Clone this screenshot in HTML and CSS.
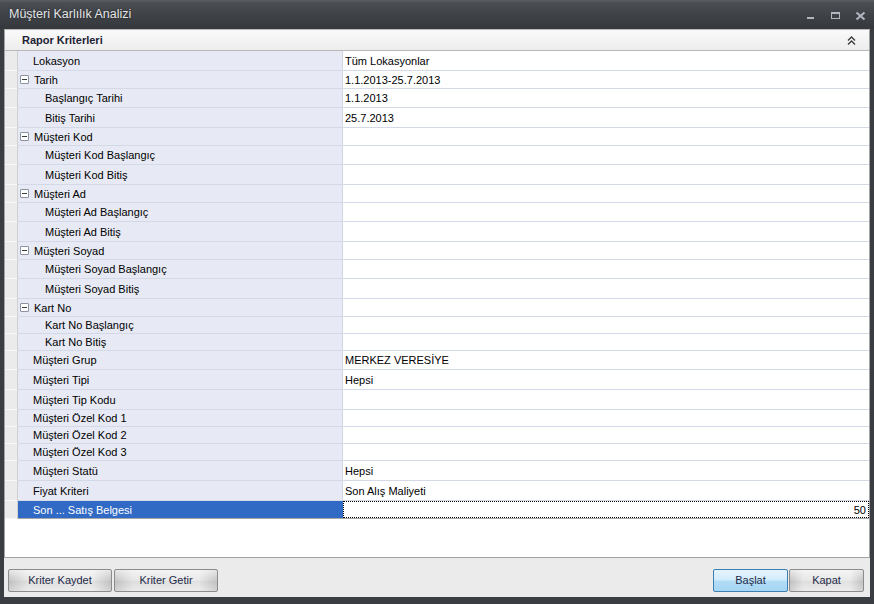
FILE: index.html
```html
<!DOCTYPE html>
<html lang="tr">
<head>
    <meta charset="UTF-8">
    <title>Müşteri Karlılık Analizi</title>
    <link rel="stylesheet" href="styles.css">
</head>
<body>
<div class="window">
    <div class="titlebar">
        <span class="title">Müşteri Karlılık Analizi</span>
        <div class="controls">
            <svg width="10" height="10" viewBox="0 0 10 10"><rect x="1" y="6" width="7" height="2" fill="#b3b7bf"/></svg>
            <svg width="11" height="10" viewBox="0 0 11 10"><rect x="1.5" y="1.5" width="8" height="6" fill="none" stroke="#b3b7bf"/><rect x="1" y="1" width="9" height="2" fill="#b3b7bf"/></svg>
            <svg width="11" height="10" viewBox="0 0 11 10"><path d="M1.5 1.5 L9.5 8.5 M9.5 1.5 L1.5 8.5" stroke="#b3b7bf" stroke-width="2"/></svg>
        </div>
    </div>

    <div class="client">
        <div class="panel">
            <div class="panel-head">
                <span>Rapor Kriterleri</span>
                <svg width="9" height="9" viewBox="0 0 9 9"><path d="M1 4.5 L4.5 1 L8 4.5 M1 8.5 L4.5 5 L8 8.5" fill="none" stroke="#3a3a3a" stroke-width="1.3"/></svg>
            </div>
            <div class="grid">
                <div class="row h20"><div class="ind"></div><div class="lbl">Lokasyon</div><div class="val">Tüm Lokasyonlar</div></div>
                <div class="row h18"><div class="ind"></div><div class="lbl grp"><i class="minus"></i>Tarih</div><div class="val">1.1.2013-25.7.2013</div></div>
                <div class="row h19"><div class="ind"></div><div class="lbl sub">Başlangıç Tarihi</div><div class="val">1.1.2013</div></div>
                <div class="row h20"><div class="ind"></div><div class="lbl sub">Bitiş Tarihi</div><div class="val">25.7.2013</div></div>
                <div class="row h18"><div class="ind"></div><div class="lbl grp"><i class="minus"></i>Müşteri Kod</div><div class="val"></div></div>
                <div class="row h19"><div class="ind"></div><div class="lbl sub">Müşteri Kod Başlangıç</div><div class="val"></div></div>
                <div class="row h20"><div class="ind"></div><div class="lbl sub">Müşteri Kod Bitiş</div><div class="val"></div></div>
                <div class="row h18"><div class="ind"></div><div class="lbl grp"><i class="minus"></i>Müşteri Ad</div><div class="val"></div></div>
                <div class="row h19"><div class="ind"></div><div class="lbl sub">Müşteri Ad Başlangıç</div><div class="val"></div></div>
                <div class="row h20"><div class="ind"></div><div class="lbl sub">Müşteri Ad Bitiş</div><div class="val"></div></div>
                <div class="row h18"><div class="ind"></div><div class="lbl grp"><i class="minus"></i>Müşteri Soyad</div><div class="val"></div></div>
                <div class="row h19"><div class="ind"></div><div class="lbl sub">Müşteri Soyad Başlangıç</div><div class="val"></div></div>
                <div class="row h20"><div class="ind"></div><div class="lbl sub">Müşteri Soyad Bitiş</div><div class="val"></div></div>
                <div class="row h18"><div class="ind"></div><div class="lbl grp"><i class="minus"></i>Kart No</div><div class="val"></div></div>
                <div class="row h17"><div class="ind"></div><div class="lbl sub">Kart No Başlangıç</div><div class="val"></div></div>
                <div class="row h17"><div class="ind"></div><div class="lbl sub">Kart No Bitiş</div><div class="val"></div></div>
                <div class="row h19"><div class="ind"></div><div class="lbl">Müşteri Grup</div><div class="val">MERKEZ VERESİYE</div></div>
                <div class="row h20"><div class="ind"></div><div class="lbl">Müşteri Tipi</div><div class="val">Hepsi</div></div>
                <div class="row h20"><div class="ind"></div><div class="lbl">Müşteri Tip Kodu</div><div class="val"></div></div>
                <div class="row h17"><div class="ind"></div><div class="lbl">Müşteri Özel Kod 1</div><div class="val"></div></div>
                <div class="row h17"><div class="ind"></div><div class="lbl">Müşteri Özel Kod 2</div><div class="val"></div></div>
                <div class="row h17"><div class="ind"></div><div class="lbl">Müşteri Özel Kod 3</div><div class="val"></div></div>
                <div class="row h20"><div class="ind"></div><div class="lbl">Müşteri Statü</div><div class="val">Hepsi</div></div>
                <div class="row h20"><div class="ind"></div><div class="lbl">Fiyat Kriteri</div><div class="val">Son Alış Maliyeti</div></div>
                <div class="row h17 selected"><div class="ind"></div><div class="lbl">Son ... Satış Belgesi</div><div class="val edit">50</div></div>
            </div>
        </div>

        <div class="footer">
            <div class="btn-group">
                <button class="btn">Kriter Kaydet</button>
                <button class="btn">Kriter Getir</button>
            </div>
            <div class="btn-group right">
                <button class="btn">Başlat</button>
                <button class="btn plain">Kapat</button>
            </div>
        </div>
    </div>
</div>
</body>
</html>
```

FILE: styles.css
```css
html, body {
    margin: 0;
    padding: 0;
}
body {
    width: 874px;
    height: 604px;
    overflow: hidden;
    background-color: #3a3d42;
    font-family: "Liberation Sans", Arial, sans-serif;
    font-size: 11px;
    color: #000000;
}

.window {
    display: flex;
    flex-direction: column;
    height: 604px;
}

.titlebar {
    height: 29px;
    flex: none;
    display: flex;
    align-items: center;
    justify-content: space-between;
    padding: 0 8px 0 9px;
    box-sizing: border-box;
    background: linear-gradient(#5b5e64 0px, #4a4d52 3px, #3e4146 16px, #35383d 29px);
}
.title {
    color: #e4e5e7;
    font-size: 12.5px;
    text-shadow: 0 0 2px #1d1f22;
    padding-bottom: 1px;
}
.controls {
    display: flex;
    gap: 14px;
    align-items: center;
    padding-top: 2px;
}

.client {
    flex: 1;
    display: flex;
    flex-direction: column;
    margin: 0 4px 7px 4px;
    background-color: #ebebeb;
}

.panel {
    flex: 1;
    background-color: #ffffff;
    border: 1px solid #a3a3a3;
    border-top: 1px solid #b8b8b8;
}
.panel-head {
    height: 20px;
    display: flex;
    align-items: center;
    justify-content: space-between;
    padding: 0 13px 0 17px;
    font-weight: bold;
    color: #1d2233;
    background: linear-gradient(#fafafa, #ededed);
    border-bottom: 1px solid #b9b9b9;
}

.grid {
    border-bottom: 1px solid #a7a7a7;
}
.row {
    display: flex;
    box-sizing: border-box;
    border-bottom: 1px solid #d3d9e6;
}
.row:last-child {
    border-bottom: none;
}
.h17 { height: 17px; }
.h18 { height: 18px; }
.h19 { height: 19px; }
.h20 { height: 20px; }

.ind {
    width: 13px;
    flex: none;
    box-sizing: border-box;
    background-color: #ebebeb;
    border-right: 1px solid #d0d0d0;
    margin-bottom: -1px;
    box-shadow: inset 0 -1px 0 #f8f8f8;
}
.lbl {
    width: 325px;
    flex: none;
    box-sizing: border-box;
    display: flex;
    align-items: center;
    padding-left: 15px;
    background-color: #e7eaf4;
    border-right: 1px solid #d0d6e4;
    white-space: nowrap;
}
.lbl.grp {
    padding-left: 2px;
}
.lbl.sub {
    padding-left: 27px;
}
.minus {
    width: 7px;
    height: 7px;
    border: 1px solid #8b92a1;
    border-radius: 1px;
    background-color: #ffffff;
    margin-right: 5px;
    position: relative;
}
.minus::after {
    content: "";
    position: absolute;
    left: 1px;
    top: 3px;
    width: 5px;
    height: 1px;
    background-color: #3c3c3c;
}
.val {
    flex: 1;
    display: flex;
    align-items: center;
    padding-left: 2px;
    white-space: nowrap;
}

.selected .lbl {
    background-color: #316ac5;
    color: #ffffff;
    border-right-color: #316ac5;
}
.val.edit {
    justify-content: flex-end;
    padding-right: 3px;
    outline: 1px dotted #000000;
    outline-offset: -1px;
}

.footer {
    height: 39px;
    flex: none;
    display: flex;
    align-items: center;
    justify-content: space-between;
    padding: 0 6px 0 4px;
    box-sizing: border-box;
}
.btn-group {
    display: flex;
    gap: 2px;
    padding-top: 5px;
}
.btn-group.right {
    gap: 1px;
}
.btn {
    width: 104px;
    height: 23px;
    font-family: "Liberation Sans", Arial, sans-serif;
    font-size: 11px;
    color: #1e2a48;
    border: 1px solid #8c8c8c;
    border-radius: 2px;
    background:
        linear-gradient(rgba(255,255,255,0.55), rgba(255,255,255,0) 50%, rgba(0,0,0,0.04) 51%, rgba(255,255,255,0.2)),
        linear-gradient(to right, #c6c6c6, #e6e6e6 18%, #e9e9e9 82%, #c6c6c6);
    padding: 0;
}
.btn-group.right .btn {
    width: 75px;
    border-color: #3c7fb1;
    background: linear-gradient(#e5f4fd, #d2ecfb 48%, #b2dcf6 52%, #a6d5f3);
}
.btn-group.right .btn.plain {
    border-color: #8c8c8c;
    background:
        linear-gradient(rgba(255,255,255,0.55), rgba(255,255,255,0) 50%, rgba(0,0,0,0.04) 51%, rgba(255,255,255,0.2)),
        linear-gradient(to right, #c6c6c6, #e6e6e6 18%, #e9e9e9 82%, #c6c6c6);
}
```
